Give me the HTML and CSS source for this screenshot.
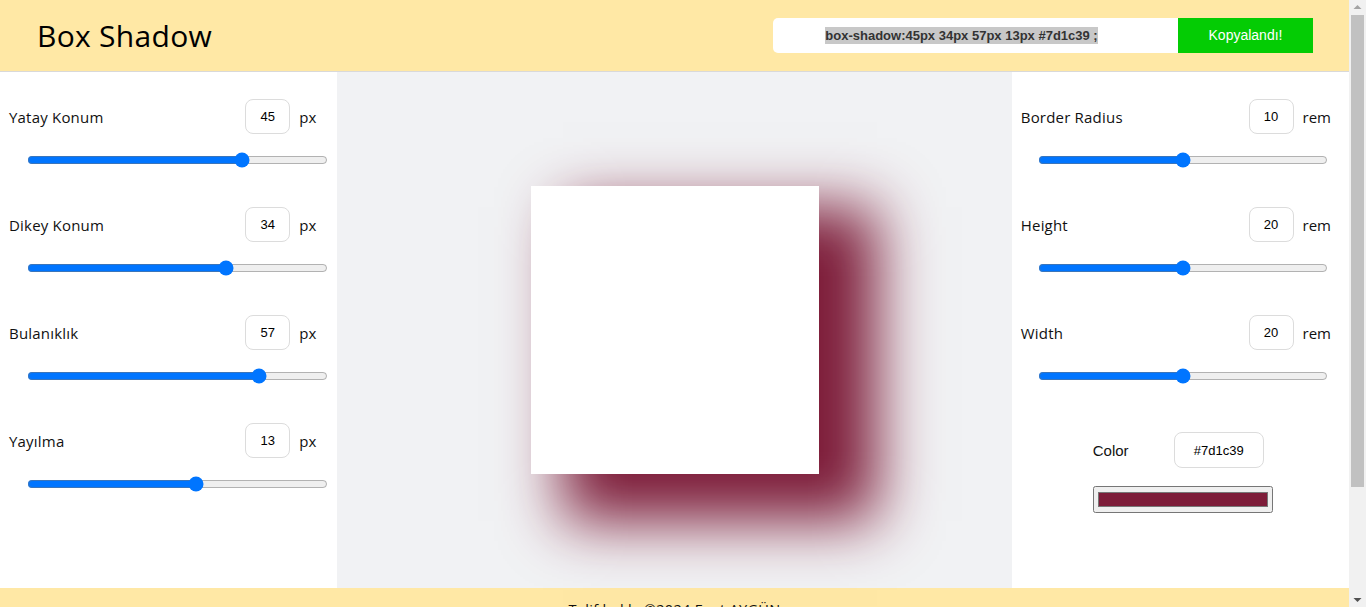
FILE: index.html
```html
<!DOCTYPE html>
<html lang="tr">
<head>
<meta charset="utf-8">
<title>Box Shadow</title>
<link rel="stylesheet" href="styles.css">
</head>
<body>
<div class="page">
<header class="header">
  <h1 class="title">Box Shadow</h1>
  <div class="copy">
    <div class="code"><span class="code-text">box-shadow:45px 34px 57px 13px #7d1c39 ;</span></div>
    <button class="copy-btn">Kopyaland&#305;!</button>
  </div>
</header>
<main class="main">
  <section class="panel panel-left">
    <div class="control">
      <div class="row"><label class="label">Yatay Konum</label><div class="val"><input class="num" type="text" value="45"><span class="unit">px</span></div></div>
      <input class="range" type="range" min="-100" max="100" value="45">
    </div>
    <div class="control">
      <div class="row"><label class="label">Dikey Konum</label><div class="val"><input class="num" type="text" value="34"><span class="unit">px</span></div></div>
      <input class="range" type="range" min="-100" max="100" value="34">
    </div>
    <div class="control">
      <div class="row"><label class="label">Bulan&#305;kl&#305;k</label><div class="val"><input class="num" type="text" value="57"><span class="unit">px</span></div></div>
      <input class="range" type="range" min="-100" max="100" value="57">
    </div>
    <div class="control">
      <div class="row"><label class="label">Yay&#305;lma</label><div class="val"><input class="num" type="text" value="13"><span class="unit">px</span></div></div>
      <input class="range" type="range" min="-100" max="100" value="13">
    </div>
  </section>
  <section class="preview">
    <div class="box"></div>
  </section>
  <section class="panel panel-right">
    <div class="control">
      <div class="row"><label class="label">Border Radius</label><div class="val"><input class="num" type="text" value="10"><span class="unit">rem</span></div></div>
      <input class="range" type="range" min="0" max="20" value="10">
    </div>
    <div class="control">
      <div class="row"><label class="label">Height</label><div class="val"><input class="num" type="text" value="20"><span class="unit">rem</span></div></div>
      <input class="range" type="range" min="0" max="40" value="20">
    </div>
    <div class="control">
      <div class="row"><label class="label">Width</label><div class="val"><input class="num" type="text" value="20"><span class="unit">rem</span></div></div>
      <input class="range" type="range" min="0" max="40" value="20">
    </div>
    <div class="color-block">
      <div class="color-row"><span class="color-label">Color</span><input class="color-text" type="text" value="#7d1c39"></div>
      <input class="color-pick" type="color" value="#7d1c39">
    </div>
  </section>
</main>
<footer class="footer">
  <p class="footer-text">Telif hakk&#305; &copy;2024 Fuat AYG&Uuml;N</p>
</footer>
</div>
<div class="scrollbar" aria-hidden="true">
  <div class="sb-btn"><svg width="17" height="17" viewBox="0 0 17 17"><path d="M4.5 10 L8.5 6 L12.5 10 Z" fill="#a3a3a3"/></svg></div>
  <div class="sb-track"><div class="sb-thumb"></div></div>
  <div class="sb-btn"><svg width="17" height="17" viewBox="0 0 17 17"><path d="M4.5 7 L8.5 11 L12.5 7 Z" fill="#505050"/></svg></div>
</div>
</body>
</html>
```
FILE: styles.css
```css
* { box-sizing: border-box; }
html, body { margin: 0; padding: 0; }
body {
  font-family: "Open Sans", "Noto Sans", sans-serif;
  color: #111;
  background: #fff;
}
.page { width: 1349px; }
.scrollbar {
  position: fixed;
  top: 0;
  right: 0;
  width: 17px;
  height: 100vh;
  background: #f1f1f1;
  display: flex;
  flex-direction: column;
}
.sb-btn { height: 15px; display: flex; align-items: center; justify-content: center; overflow: hidden; }
.sb-btn svg { display: block; flex: none; }
.sb-track { flex: 1; padding: 0 2px; }
.sb-thumb { height: 472px; background: #c1c1c1; }
.header {
  height: 72px;
  background: #ffe8a5;
  border-bottom: 1px solid #d9d9d9;
  display: flex;
  align-items: center;
  justify-content: space-between;
  padding: 0 36px 0 37px;
}
.title {
  margin: 0;
  font-weight: 400;
  font-size: 30px;
  letter-spacing: 0.3px;
  color: #000;
}
.copy {
  display: flex;
  align-items: stretch;
  height: 35px;
  margin-top: -1px;
}
.code {
  width: 405px;
  background: #fff;
  border-radius: 5px 0 0 5px;
  display: flex;
  align-items: center;
  justify-content: center;
  padding-right: 28px;
  font-family: "Liberation Sans", Arial, sans-serif;
  font-weight: 700;
  font-size: 13px;
  color: #333;
}
.code-text { background: #c8c8c8; padding: 1px 0; }
.copy-btn {
  width: 135px;
  border: none;
  background: #04cc04;
  color: #fff;
  font-family: "Liberation Sans", Arial, sans-serif;
  font-size: 14px;
  padding: 0;
}
.main {
  display: grid;
  grid-template-columns: 25% 50% 25%;
  height: 516px;
}
.panel { padding-top: 27px; background: #fff; }
.control { height: 108px; display: flex; flex-direction: column; }
.row {
  display: flex;
  align-items: center;
  justify-content: space-between;
  height: 35px;
  padding-left: 9px;
  padding-right: 21px;
}
.panel-right .row { padding-right: 18px; }
.label { font-size: 15px; letter-spacing: 0.2px; }
.val { display: flex; align-items: center; gap: 9px; }
.num {
  width: 45px;
  height: 35px;
  border: 1px solid #dcdcdc;
  border-radius: 8px;
  text-align: center;
  font-family: "Liberation Sans", Arial, sans-serif;
  font-size: 13px;
  color: #000;
  padding: 0;
  outline: none;
}
.unit { font-size: 15px; }
.range {
  margin: 18px 9px 0 27px;
  width: 301px;
  height: 16px;
  accent-color: #0075ff;
}
.panel-right .range { margin-left: 26px; width: 290px; }
.preview {
  background: #f1f2f4;
  display: flex;
  align-items: center;
  justify-content: center;
}
.box {
  width: 288px;
  height: 288px;
  background: #fff;
  box-shadow: 45px 34px 57px 13px #7d1c39;
}
.color-block {
  display: flex;
  flex-direction: column;
  align-items: flex-start;
  padding-left: 81px;
  padding-top: 9px;
}
.color-row { display: flex; align-items: center; }
.color-label {
  width: 81px;
  font-family: "Liberation Sans", Arial, sans-serif;
  font-size: 15px;
}
.color-text {
  width: 90px;
  height: 36px;
  border: 1px solid #dcdcdc;
  border-radius: 8px;
  text-align: center;
  font-family: "Liberation Sans", Arial, sans-serif;
  font-size: 13px;
  color: #000;
  padding: 0;
  outline: none;
}
.color-pick {
  margin-top: 18px;
  width: 180px;
  height: 27px;
}
.footer {
  background: #ffe8a5;
  height: 149px;
  padding-top: 12px;
  text-align: center;
}
.footer-text { margin: 0; font-size: 14.5px; letter-spacing: 0.3px; }
```
